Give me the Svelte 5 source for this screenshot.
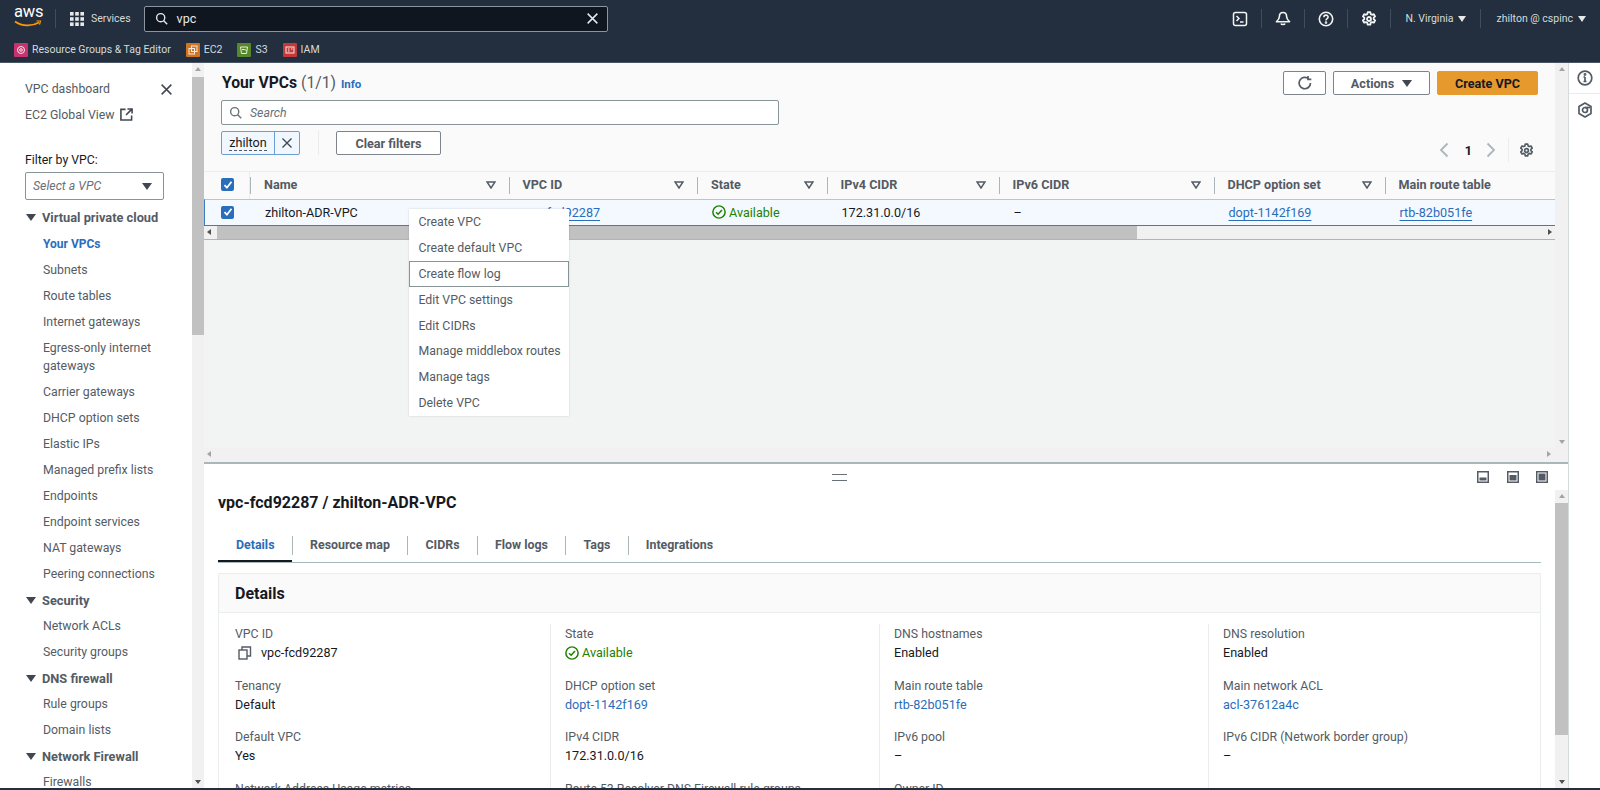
<script>
	const favs = [
		{ label: "Resource Groups & Tag Editor", color: "#c7326f" },
		{ label: "EC2", color: "#cf7420" },
		{ label: "S3", color: "#56892b" },
		{ label: "IAM", color: "#c5383a" },
	];

	const nav = [
		{ label: "Virtual private cloud", group: true },
		{ label: "Your VPCs", active: true },
		{ label: "Subnets" },
		{ label: "Route tables" },
		{ label: "Internet gateways" },
		{ label: "Egress-only internet gateways", tall: true },
		{ label: "Carrier gateways" },
		{ label: "DHCP option sets" },
		{ label: "Elastic IPs" },
		{ label: "Managed prefix lists" },
		{ label: "Endpoints" },
		{ label: "Endpoint services" },
		{ label: "NAT gateways" },
		{ label: "Peering connections" },
		{ label: "Security", group: true },
		{ label: "Network ACLs" },
		{ label: "Security groups" },
		{ label: "DNS firewall", group: true },
		{ label: "Rule groups" },
		{ label: "Domain lists" },
		{ label: "Network Firewall", group: true },
		{ label: "Firewalls" },
	];

	const columns = ["Name", "VPC ID", "State", "IPv4 CIDR", "IPv6 CIDR", "DHCP option set", "Main route table"];
	const menu = ["Create VPC", "Create default VPC", "Create flow log", "Edit VPC settings", "Edit CIDRs", "Manage middlebox routes", "Manage tags", "Delete VPC"];
	const tabs = ["Details", "Resource map", "CIDRs", "Flow logs", "Tags", "Integrations"];

	const details = [
		[
			{ label: "VPC ID", value: "vpc-fcd92287", kind: "copy" },
			{ label: "Tenancy", value: "Default" },
			{ label: "Default VPC", value: "Yes" },
			{ label: "Network Address Usage metrics", value: "Disabled" },
		],
		[
			{ label: "State", value: "Available", kind: "status" },
			{ label: "DHCP option set", value: "dopt-1142f169", kind: "link" },
			{ label: "IPv4 CIDR", value: "172.31.0.0/16" },
			{ label: "Route 53 Resolver DNS Firewall rule groups", value: "–" },
		],
		[
			{ label: "DNS hostnames", value: "Enabled" },
			{ label: "Main route table", value: "rtb-82b051fe", kind: "link" },
			{ label: "IPv6 pool", value: "–" },
			{ label: "Owner ID", value: "–" },
		],
		[
			{ label: "DNS resolution", value: "Enabled" },
			{ label: "Main network ACL", value: "acl-37612a4c", kind: "link" },
			{ label: "IPv6 CIDR (Network border group)", value: "–" },
		],
	];
</script>

{#snippet gear(size)}
	<svg width={size} height={size} viewBox="0 0 16 16" fill="none" stroke="currentColor" stroke-width="1.8">
		<circle cx="8" cy="8" r="2" />
		<path d="M6.7 1.2h2.6l.4 1.9 1.3.7 1.8-.6 1.3 2.2-1.4 1.3v1.5l1.4 1.3-1.3 2.2-1.8-.6-1.3.7-.4 1.9H6.7l-.4-1.9-1.3-.7-1.8.6-1.3-2.2 1.4-1.3V6.7L1.9 5.4l1.3-2.2 1.8.6 1.3-.7z" stroke-linejoin="round" />
	</svg>
{/snippet}

{#snippet cross(size)}
	<svg width={size} height={size} viewBox="0 0 16 16" fill="none" stroke="currentColor" stroke-width="1.8">
		<path d="M2 2l12 12M14 2L2 14" />
	</svg>
{/snippet}

{#snippet lens(size)}
	<svg width={size} height={size} viewBox="0 0 16 16" fill="none" stroke="currentColor" stroke-width="1.7">
		<circle cx="7" cy="7" r="5" />
		<path d="M10.7 10.7L15 15" />
	</svg>
{/snippet}

{#snippet check()}
	<span class="check">
		<svg width="10" height="10" viewBox="0 0 10 10" fill="none" stroke="#fff" stroke-width="1.8"><path d="M1.5 5.2l2.4 2.5 4.6-6" /></svg>
	</span>
{/snippet}

{#snippet okIcon()}
	<svg width="14" height="14" viewBox="0 0 16 16" fill="none" stroke="#1d8102" stroke-width="1.7">
		<circle cx="8" cy="8" r="7" />
		<path d="M4.6 8.2l2.4 2.4 4.4-5" />
	</svg>
{/snippet}

{#snippet caret()}
	<span class="caret"></span>
{/snippet}

<div class="page">
	<header class="topbar">
		<div class="bar-main">
			<div class="logo">
				<span class="logo-text">aws</span>
				<svg class="smile" width="28" height="8" viewBox="0 0 28 8" fill="none">
					<path d="M1 1.5c7 5 17 5 24 1" stroke="#ff9900" stroke-width="1.6" />
					<path d="M22.5 1h4l-1 3.6" stroke="#ff9900" stroke-width="1.2" />
				</svg>
			</div>
			<span class="bar-sep first"></span>
			<svg class="grid-icon" width="14" height="14" viewBox="0 0 14 14" fill="#e6e8ea">
				<rect width="3.6" height="3.6" /><rect x="5.2" width="3.6" height="3.6" /><rect x="10.4" width="3.6" height="3.6" />
				<rect y="5.2" width="3.6" height="3.6" /><rect x="5.2" y="5.2" width="3.6" height="3.6" /><rect x="10.4" y="5.2" width="3.6" height="3.6" />
				<rect y="10.4" width="3.6" height="3.6" /><rect x="5.2" y="10.4" width="3.6" height="3.6" /><rect x="10.4" y="10.4" width="3.6" height="3.6" />
			</svg>
			<span class="services">Services</span>
			<div class="global-search">
				{@render lens(13)}
				<span class="query">vpc</span>
				<span class="clear">{@render cross(13)}</span>
			</div>
			<div class="bar-right">
				<span class="bar-icon">
					<svg width="16" height="16" viewBox="0 0 16 16" fill="none" stroke="currentColor" stroke-width="1.5">
						<rect x="1.5" y="1.5" width="13" height="13" rx="2" />
						<path d="M4.5 5l2.5 2.5L4.5 10M8 11h3.5" />
					</svg>
				</span>
				<span class="bar-sep"></span>
				<span class="bar-icon">
					<svg width="16" height="16" viewBox="0 0 16 16" fill="none" stroke="currentColor" stroke-width="1.6">
						<path d="M8 1.5c-2.4 0-3.6 1.8-3.6 4 0 2.4-1 3.5-3 5.3h13.2c-2-1.8-3-2.9-3-5.3 0-2.2-1.2-4-3.6-4zM6 12.5c.3 1.3 3.7 1.3 4 0" stroke-linejoin="round" />
					</svg>
				</span>
				<span class="bar-sep"></span>
				<span class="bar-icon">
					<svg width="16" height="16" viewBox="0 0 16 16" fill="none" stroke="currentColor" stroke-width="1.6">
						<circle cx="8" cy="8" r="6.7" />
						<path d="M5.9 6.2c0-2.7 4.2-2.7 4.2-.1 0 1.7-2.1 1.6-2.1 3.4" />
						<circle cx="8" cy="11.6" r=".5" />
					</svg>
				</span>
				<span class="bar-sep"></span>
				<span class="bar-icon">{@render gear(16)}</span>
				<span class="bar-sep"></span>
				<span class="bar-menu region">N. Virginia <i class="mini-caret"></i></span>
				<span class="bar-sep"></span>
				<span class="bar-menu user">zhilton @ cspinc <i class="mini-caret"></i></span>
			</div>
		</div>
		<div class="bar-favs">
			{#each favs as fav, i}
				<span class="fav">
					<span class="fav-icon" style="background: {fav.color}">
						<svg width="10" height="10" viewBox="0 0 10 10" fill="none" stroke="#f4e9e4" stroke-width="1">
							{#if i === 0}
								<circle cx="5" cy="5" r="3.5" /><circle cx="5" cy="5" r="1.3" />
							{:else if i === 1}
								<rect x="3.5" y="1" width="5.5" height="5.5" /><rect x="1" y="3.5" width="5.5" height="5.5" />
							{:else if i === 2}
								<path d="M1.5 2h7l-1 6.5h-5zM3 4.5h2.5l2 1" />
							{:else}
								<rect x="1" y="2" width="8" height="6" /><path d="M3 4h1.5M3 6h1.5M6 4h1.5" />
							{/if}
						</svg>
					</span>
					{fav.label}
				</span>
			{/each}
		</div>
	</header>

	<div class="workspace">
		<aside class="sidebar">
			<div class="side-top">
				<span>VPC dashboard</span>
				<span class="side-close">{@render cross(13)}</span>
			</div>
			<div class="side-link">
				EC2 Global View
				<svg width="13" height="13" viewBox="0 0 14 14" fill="none" stroke="#414750" stroke-width="1.7">
					<path d="M6 1.5H1V13h11.5V8M8 1h5v5M13 1L6.5 7.5" />
				</svg>
			</div>
			<div class="filter-label">Filter by VPC:</div>
			<div class="filter-select">
				<span>Select a VPC</span>
				{@render caret()}
			</div>
			<nav class="side-nav">
				{#each nav as item}
					{#if item.group}
						<div class="nav-group">{@render caret()}<span>{item.label}</span></div>
					{:else}
						<div class="nav-item" class:active={item.active} class:tall={item.tall}>{item.label}</div>
					{/if}
				{/each}
			</nav>
		</aside>

		<div class="scrollbar side-scroll">
			<span class="arrow up"></span>
			<span class="thumb"></span>
			<span class="arrow down"></span>
		</div>

		<main class="content">
			<section class="upper">
				<div class="upper-main">
					<div class="list-head">
						<div class="title-row">
							<h1>Your VPCs <span class="count">(1/1)</span> <a class="info" href="#info">Info</a></h1>
							<div class="actions">
								<button class="btn icon-btn" aria-label="Refresh">
									<svg width="16" height="16" viewBox="0 0 16 16" fill="none" stroke="currentColor" stroke-width="1.7">
										<path d="M13.5 8a5.7 5.7 0 1 1-1.9-4.2M11 1v3.3h3.3" />
									</svg>
								</button>
								<button class="btn actions-btn">Actions {@render caret()}</button>
								<button class="btn primary">Create VPC</button>
							</div>
						</div>
						<div class="list-search">
							{@render lens(13)}
							<span>Search</span>
						</div>
						<div class="filter-row">
							<span class="token">
								<span class="token-text"><span>zhilton</span></span>
								<span class="token-x">{@render cross(12)}</span>
							</span>
							<span class="filter-sep"></span>
							<button class="btn clear-btn">Clear filters</button>
							<div class="pager">
								<svg width="10" height="16" viewBox="0 0 10 16" fill="none" stroke="#aab7b8" stroke-width="1.8"><path d="M8.5 1.5L2 8l6.5 6.5" /></svg>
								<b>1</b>
								<svg width="10" height="16" viewBox="0 0 10 16" fill="none" stroke="#aab7b8" stroke-width="1.8"><path d="M1.5 1.5L8 8l-6.5 6.5" /></svg>
								<span class="pager-sep"></span>
								<span class="pager-gear">{@render gear(15)}</span>
							</div>
						</div>
					</div>

					<div class="table">
						<div class="tr th">
							<div class="cell check-cell">{@render check()}</div>
							{#each columns as col}
								<div class="cell head-cell">
									<span>{col}</span>
									<svg width="10" height="8" viewBox="0 0 10 8" fill="none" stroke="#545b64" stroke-width="1.5"><path d="M1 1h8L5 7z" /></svg>
								</div>
							{/each}
						</div>
						<div class="tr td">
							<div class="cell check-cell">{@render check()}</div>
							<div class="cell">zhilton-ADR-VPC</div>
							<div class="cell"><a class="link under" href="#vpc">vpc-fcd92287</a></div>
							<div class="cell ok">{@render okIcon()} Available</div>
							<div class="cell">172.31.0.0/16</div>
							<div class="cell">–</div>
							<div class="cell"><a class="link under" href="#dopt">dopt-1142f169</a></div>
							<div class="cell"><a class="link under" href="#rtb">rtb-82b051fe</a></div>
						</div>
					</div>
					<div class="hscroll">
						<span class="harrow left"></span>
						<span class="hthumb"></span>
						<span class="harrow right"></span>
					</div>
					<div class="grid-empty"></div>
					<div class="hscroll plain">
						<span class="harrow left"></span>
						<span class="harrow right"></span>
					</div>

					<ul class="context-menu">
						{#each menu as entry, i}
							<li class:focus={i === 2}>{entry}</li>
						{/each}
					</ul>
				</div>
				<div class="scrollbar upper-scroll">
					<span class="arrow up"></span>
					<span class="spacer"></span>
					<span class="arrow down"></span>
				</div>
			</section>

			<section class="lower">
				<div class="split-bar">
					<span class="handle"></span>
					<div class="split-icons">
						<svg width="12" height="12" viewBox="0 0 12 12"><rect x=".75" y=".75" width="10.5" height="10.5" fill="#fff" stroke="#545b64" stroke-width="1.5" /><rect x="2.5" y="6.5" width="7" height="3" fill="#545b64" /></svg>
						<svg width="12" height="12" viewBox="0 0 12 12"><rect x=".75" y=".75" width="10.5" height="10.5" fill="#fff" stroke="#545b64" stroke-width="1.5" /><rect x="2.5" y="4" width="7" height="5.5" fill="#545b64" /></svg>
						<svg width="12" height="12" viewBox="0 0 12 12"><rect x=".75" y=".75" width="10.5" height="10.5" fill="#fff" stroke="#545b64" stroke-width="1.5" /><rect x="2.5" y="2.5" width="7" height="7" fill="#545b64" /></svg>
					</div>
				</div>
				<div class="detail-wrap">
					<div class="detail">
						<h2>vpc-fcd92287 / zhilton-ADR-VPC</h2>
						<div class="tabs">
							{#each tabs as tab, i}
								<span class="tab" class:active={i === 0}>{tab}</span>
							{/each}
						</div>
						<div class="card">
							<div class="card-head">Details</div>
							<div class="card-body">
								{#each details as col}
									<div class="col">
										{#each col as field}
											<div class="field">
												<div class="f-label">{field.label}</div>
												{#if field.kind === "copy"}
													<div class="f-value copy">
														<svg width="14" height="14" viewBox="0 0 14 14" fill="none" stroke="#545b64" stroke-width="1.4"><rect x="1" y="4" width="8" height="9" /><path d="M4 4V1h8.5v9H9" /></svg>
														{field.value}
													</div>
												{:else if field.kind === "status"}
													<div class="f-value ok">{@render okIcon()} {field.value}</div>
												{:else if field.kind === "link"}
													<div class="f-value"><a class="link" href="#detail">{field.value}</a></div>
												{:else}
													<div class="f-value">{field.value}</div>
												{/if}
											</div>
										{/each}
									</div>
								{/each}
							</div>
						</div>
					</div>
					<div class="scrollbar detail-scroll">
						<span class="arrow up"></span>
						<span class="thumb"></span>
						<span class="arrow down"></span>
					</div>
				</div>
			</section>
		</main>

		<aside class="rail">
			<div class="rail-item">
				<svg width="16" height="16" viewBox="0 0 16 16" fill="none" stroke="#545b64" stroke-width="1.7">
					<circle cx="8" cy="8" r="6.8" />
					<path d="M8 7v4.5M6.5 11.5h3M6.5 7H8" />
					<circle cx="8" cy="4.5" r=".6" />
				</svg>
			</div>
			<div class="rail-item second">
				<svg width="16" height="16" viewBox="0 0 16 16" fill="none" stroke="#545b64" stroke-width="1.7">
					<path d="M8 1l6 3.5v7L8 15l-6-3.5v-7z" stroke-linejoin="round" />
					<circle cx="8" cy="8" r="2.5" />
					<path d="M8 5.5h5" />
				</svg>
			</div>
		</aside>
	</div>
	<div class="footer-edge"></div>
</div>

<style>
	:global(body) {
		margin: 0;
		overflow: hidden;
	}

	.page {
		width: 1600px;
		height: 790px;
		display: flex;
		flex-direction: column;
		overflow: hidden;
		font-family: Roboto, "Noto Sans", sans-serif;
		font-size: 12.6px;
		color: #16191f;
		background: #fff;
	}

	a {
		text-decoration: none;
	}

	h1, h2 {
		margin: 0;
	}

	/* top navigation */
	.topbar {
		height: 63px;
		flex: none;
		background: #232f3e;
		border-bottom: 1px solid #485564;
		box-sizing: border-box;
		color: #d5dbdb;
	}

	.bar-main {
		height: 37px;
		display: flex;
		align-items: center;
		padding-left: 14px;
	}

	.logo {
		width: 28px;
		height: 26px;
		position: relative;
		margin-top: -3px;
	}

	.logo-text {
		display: block;
		font-size: 16.5px;
		line-height: 16px;
		color: #fff;
		letter-spacing: -0.2px;
	}

	.smile {
		position: absolute;
		left: 0;
		top: 16px;
	}

	.bar-sep {
		width: 1px;
		height: 19px;
		background: #414d5c;
		flex: none;
	}

	.bar-sep.first {
		margin-left: 13px;
	}

	.grid-icon {
		margin-left: 14px;
		flex: none;
	}

	.services {
		margin-left: 7px;
		font-size: 10.5px;
	}

	.global-search {
		margin-left: 13px;
		width: 464px;
		height: 26px;
		box-sizing: border-box;
		display: flex;
		align-items: center;
		padding: 0 8px 0 10px;
		border: 1px solid #8b96a3;
		border-radius: 2px;
		background: #10161f;
		color: #e6e8ea;
	}

	.query {
		margin-left: 9px;
		font-size: 12.6px;
		flex: 1;
	}

	.clear {
		display: flex;
	}

	.bar-right {
		margin-left: auto;
		display: flex;
		align-items: center;
		height: 100%;
		color: #f2f3f3;
	}

	.bar-icon {
		width: 42px;
		display: flex;
		justify-content: center;
	}

	.bar-menu {
		display: flex;
		align-items: center;
		gap: 5px;
		font-size: 10.5px;
		color: #d5dbdb;
	}

	.region {
		padding: 0 14px;
	}

	.user {
		padding: 0 14px 0 15px;
	}

	.mini-caret {
		width: 0;
		height: 0;
		border-left: 4px solid transparent;
		border-right: 4px solid transparent;
		border-top: 6px solid #e6e8ea;
	}

	.bar-favs {
		height: 25px;
		display: flex;
		align-items: center;
		padding-left: 14px;
		gap: 15px;
		font-size: 10.5px;
		color: #d5dbdb;
	}

	.fav {
		display: flex;
		align-items: center;
		gap: 4px;
	}

	.fav-icon {
		width: 14px;
		height: 14px;
		display: flex;
		align-items: center;
		justify-content: center;
		border-radius: 1px;
	}

	/* page body */
	.workspace {
		flex: 1;
		min-height: 0;
		display: flex;
	}

	.footer-edge {
		height: 2px;
		flex: none;
		background: #232f3e;
	}

	.sidebar {
		width: 192px;
		flex: none;
		padding: 13px 0 0 25px;
		box-sizing: border-box;
		overflow: hidden;
		font-size: 12.3px;
		color: #545b64;
	}

	.side-top {
		display: flex;
		justify-content: space-between;
		align-items: center;
		height: 26px;
		padding-right: 19px;
	}

	.side-close {
		display: flex;
		color: #414750;
	}

	.side-link {
		height: 25px;
		display: flex;
		align-items: center;
		gap: 5px;
	}

	.filter-label {
		margin-top: 20px;
		height: 26px;
		line-height: 26px;
		color: #16191f;
	}

	.filter-select {
		margin-top: -1px;
		width: 139px;
		height: 28px;
		box-sizing: border-box;
		border: 1px solid #879596;
		border-radius: 2px;
		display: flex;
		align-items: center;
		justify-content: space-between;
		padding: 0 11px 0 7px;
		font-style: italic;
		color: #687078;
	}

	.caret {
		display: inline-block;
		width: 0;
		height: 0;
		border-left: 5px solid transparent;
		border-right: 5px solid transparent;
		border-top: 7px solid #414750;
	}

	.side-nav {
		margin-top: 4.5px;
	}

	.nav-group {
		height: 26px;
		display: flex;
		align-items: center;
		gap: 6px;
		font-size: 12.8px;
		font-weight: 700;
		color: #545b64;
	}

	.nav-group .caret {
		margin-left: 1px;
	}

	.nav-item {
		height: 26px;
		line-height: 26px;
		padding-left: 18px;
	}

	.nav-item.tall {
		height: 44.5px;
		line-height: 18.5px;
		padding-top: 4px;
		box-sizing: border-box;
		padding-right: 30px;
	}

	.nav-item.active {
		color: #2a6dbb;
		font-size: 12px;
		font-weight: 700;
	}

	/* fake scrollbars */
	.scrollbar {
		width: 13px;
		flex: none;
		display: flex;
		flex-direction: column;
		align-items: center;
		background: #f1f1f1;
	}

	.side-scroll {
		width: 12px;
	}

	.thumb {
		width: 100%;
		background: #c1c1c1;
	}

	.side-scroll .thumb {
		height: 258px;
		margin-top: 6px;
	}

	.spacer {
		flex: 1;
	}

	.arrow {
		width: 0;
		height: 0;
		border-left: 3.5px solid transparent;
		border-right: 3.5px solid transparent;
		flex: none;
	}

	.arrow.up {
		border-bottom: 4px solid #a3a3a3;
		margin-top: 4px;
	}

	.arrow.down {
		margin-top: auto;
		margin-bottom: 4px;
		border-top: 4px solid #505050;
	}

	.upper-scroll .arrow.down {
		margin-bottom: 18px;
		border-top-color: #a3a3a3;
	}

	/* split panels */
	.content {
		flex: 1;
		min-width: 0;
		display: flex;
		flex-direction: column;
	}

	.upper {
		height: 399px;
		flex: none;
		display: flex;
		background: #f2f3f3;
	}

	.upper-main {
		flex: 1;
		min-width: 0;
		display: flex;
		flex-direction: column;
		position: relative;
	}

	.list-head {
		height: 109px;
		box-sizing: border-box;
		padding: 8px 17px 0;
		background: #fafafa;
		border-bottom: 1px solid #eaeded;
		flex: none;
	}

	.title-row {
		display: flex;
		justify-content: space-between;
		align-items: center;
		height: 24px;
	}

	h1 {
		font-size: 15.7px;
		font-weight: 700;
		line-height: 24px;
		margin: 1px 0 0 1px;
	}

	.count {
		font-weight: 400;
		color: #545b64;
	}

	.info {
		margin-left: 1px;
		font-size: 11.5px;
		font-weight: 700;
		color: #2a6dbb;
	}

	.actions {
		display: flex;
		gap: 7px;
	}

	.btn {
		height: 24px;
		box-sizing: border-box;
		border: 1px solid #7d848c;
		border-radius: 2px;
		background: #fff;
		color: #545b64;
		font: inherit;
		font-weight: 700;
		display: inline-flex;
		align-items: center;
		justify-content: center;
		gap: 8px;
		padding: 0;
	}

	.icon-btn {
		width: 43px;
	}

	.actions-btn {
		width: 97px;
	}

	.primary {
		width: 101px;
		background: #e69a2e;
		border-color: #e69a2e;
		color: #16191f;
	}

	.list-search {
		margin-top: 5px;
		width: 558px;
		height: 25px;
		box-sizing: border-box;
		border: 1px solid #879596;
		border-radius: 2px;
		background: #fff;
		display: flex;
		align-items: center;
		gap: 8px;
		padding-left: 7px;
		font-style: italic;
		font-size: 12.3px;
		color: #687078;
	}

	.filter-row {
		margin-top: 6px;
		display: flex;
		align-items: center;
		height: 24px;
		color: #16191f;
	}

	.token {
		display: flex;
		height: 24px;
		width: 79px;
		box-sizing: border-box;
		border: 1px solid #6b9fd4;
		border-radius: 2px;
		background: #f1f7ff;
	}

	.token-text {
		width: 52px;
		display: flex;
		align-items: center;
		justify-content: center;
		border-right: 1px solid #6b9fd4;
	}

	.token-text span {
		border-bottom: 1px dashed #545b64;
		line-height: 14px;
	}

	.token-x {
		flex: 1;
		display: flex;
		align-items: center;
		justify-content: center;
		color: #414750;
	}

	.filter-sep {
		width: 1px;
		height: 24px;
		margin: 0 17px 0 18px;
		background: #eaeded;
	}

	.clear-btn {
		width: 105px;
	}

	.pager {
		margin-left: auto;
		display: flex;
		align-items: center;
		margin-top: 14px;
		margin-right: 4px;
	}

	.pager b {
		margin: 0 14px 0 16px;
	}

	.pager-sep {
		width: 1px;
		height: 24px;
		margin: 0 10px 0 12px;
		background: #eaeded;
	}

	.pager-gear {
		display: flex;
		color: #545b64;
	}

	.table {
		flex: none;
		overflow: hidden;
	}

	.tr {
		display: grid;
		grid-template-columns: 46px 258.5px 188.5px 129.5px 172px 215px 171px 200px;
		width: 1382px;
		box-sizing: border-box;
	}

	.th {
		height: 27px;
		background: #fafafa;
		font-weight: 700;
		color: #545b64;
	}

	.td {
		height: 27px;
		background: #f4f9ff;
		border: 1px solid #3d7cc0;
		border-top-color: #a8c8e4;
		border-right: 0;
	}

	.cell {
		display: flex;
		align-items: center;
		padding-left: 14px;
		box-sizing: border-box;
		min-width: 0;
		white-space: nowrap;
	}

	.th .cell {
		padding-bottom: 2px;
	}

	.td .cell {
		padding-bottom: 1px;
	}

	.head-cell {
		justify-content: space-between;
		padding-right: 13px;
		position: relative;
	}

	.head-cell::before {
		content: "";
		position: absolute;
		left: 0;
		top: 5px;
		bottom: 5px;
		width: 1px;
		background: #aab7b8;
	}

	.check-cell {
		padding-left: 17px;
	}

	.td .check-cell {
		padding-left: 16px;
	}

	.th .check-cell {
		box-shadow: inset -1px 0 0 #eaeded;
	}

	.check {
		width: 13px;
		height: 13px;
		border-radius: 2px;
		background: #2a6dbb;
		display: flex;
		align-items: center;
		justify-content: center;
	}

	.link {
		color: #2a6dbb;
	}

	.under {
		text-decoration: underline;
		text-underline-offset: 3px;
	}

	.ok {
		color: #1d8102;
		display: flex;
		align-items: center;
		gap: 3px;
	}

	.hscroll {
		height: 13px;
		flex: none;
		display: flex;
		align-items: center;
		background: #f1f1f1;
		position: relative;
	}

	.hscroll.plain {
		height: 14px;
	}

	.hthumb {
		width: 920px;
		height: 100%;
		margin-left: 13px;
		background: #c1c1c1;
	}

	.harrow {
		position: absolute;
		top: 3px;
		width: 0;
		height: 0;
		border-top: 3.5px solid transparent;
		border-bottom: 3.5px solid transparent;
	}

	.harrow.left {
		left: 3px;
		border-right: 4px solid #505050;
	}

	.harrow.right {
		right: 3px;
		border-left: 4px solid #505050;
	}

	.plain .harrow.left {
		border-right-color: #a3a3a3;
	}

	.plain .harrow.right {
		right: 4px;
		border-left-color: #a3a3a3;
	}

	.grid-empty {
		flex: 1;
		border-top: 1px solid #aab7b8;
	}

	.context-menu {
		position: absolute;
		left: 205px;
		top: 146px;
		width: 160px;
		margin: 0;
		padding: 0;
		list-style: none;
		background: #fff;
		box-shadow: 0 0 2px rgba(0, 0, 0, 0.15);
		font-size: 12.3px;
		color: #545b64;
	}

	.context-menu li {
		height: 25.9px;
		line-height: 27.5px;
		padding-left: 9.5px;
		box-sizing: border-box;
	}

	.context-menu li.focus {
		outline: 1px solid #879596;
		outline-offset: -1px;
	}

	.lower {
		flex: 1;
		min-height: 0;
		display: flex;
		flex-direction: column;
		border-top: 2px solid #aab7b8;
	}

	.split-bar {
		height: 26px;
		flex: none;
		display: flex;
		justify-content: center;
		align-items: center;
		position: relative;
	}

	.handle {
		width: 15px;
		height: 5px;
		margin-left: -94px;
		border-top: 1px solid #687078;
		border-bottom: 1px solid #687078;
	}

	.split-icons {
		position: absolute;
		top: 7px;
		right: 20px;
		display: flex;
		gap: 17.5px;
	}

	.detail-wrap {
		flex: 1;
		min-height: 0;
		display: flex;
	}

	.detail {
		flex: 1;
		min-width: 0;
		padding: 0 14px;
		overflow: hidden;
	}

	h2 {
		font-size: 16px;
		font-weight: 700;
		line-height: 26px;
	}

	.tabs {
		margin-top: 11px;
		height: 36px;
		box-sizing: border-box;
		display: flex;
		align-items: center;
		border-bottom: 1px solid #a9b8b8;
		color: #545b64;
		font-size: 12.4px;
		font-weight: 700;
	}

	.tab {
		height: 35px;
		box-sizing: border-box;
		display: flex;
		align-items: center;
		padding: 0 17.5px 0 18px;
		position: relative;
	}

	.tab + .tab::before {
		content: "";
		position: absolute;
		left: 0;
		top: 9px;
		bottom: 7px;
		width: 1px;
		background: #aab7b8;
	}

	.tab.active {
		color: #2a6dbb;
		box-shadow: inset 0 -2px 0 #16191f;
	}

	.card {
		margin-top: 10px;
		border: 1px solid #eaeded;
		border-radius: 1px;
	}

	.card-head {
		height: 39px;
		box-sizing: border-box;
		padding-left: 16px;
		display: flex;
		align-items: center;
		background: #fafafa;
		border-bottom: 1px solid #eaeded;
		font-size: 16px;
		font-weight: 700;
	}

	.card-body {
		display: grid;
		grid-template-columns: 331px 329px 329px 1fr;
		padding-top: 11px;
	}

	.col {
		padding-left: 14px;
		border-left: 1px solid #eaeded;
		min-height: 220px;
	}

	.col:first-child {
		padding-left: 16px;
		border-left: 0;
	}

	.field {
		height: 51.6px;
	}

	.f-label {
		padding-top: 1px;
		line-height: 18px;
		font-size: 12.3px;
		color: #545b64;
	}

	.f-value {
		line-height: 19px;
	}

	.copy {
		display: flex;
		align-items: center;
		gap: 9px;
		padding-left: 3px;
	}

	.detail-scroll .thumb {
		height: 232px;
		margin-top: 5px;
	}

	.rail {
		width: 32px;
		flex: none;
		box-sizing: border-box;
		border-left: 1px solid #d5dbdb;
	}

	.rail-item {
		height: 31px;
		padding-top: 7px;
		box-sizing: border-box;
		display: flex;
		justify-content: center;
		border-bottom: 1px solid #eaeded;
	}

	.rail-item.second {
		border-bottom: 0;
		padding-top: 8px;
	}
</style>
